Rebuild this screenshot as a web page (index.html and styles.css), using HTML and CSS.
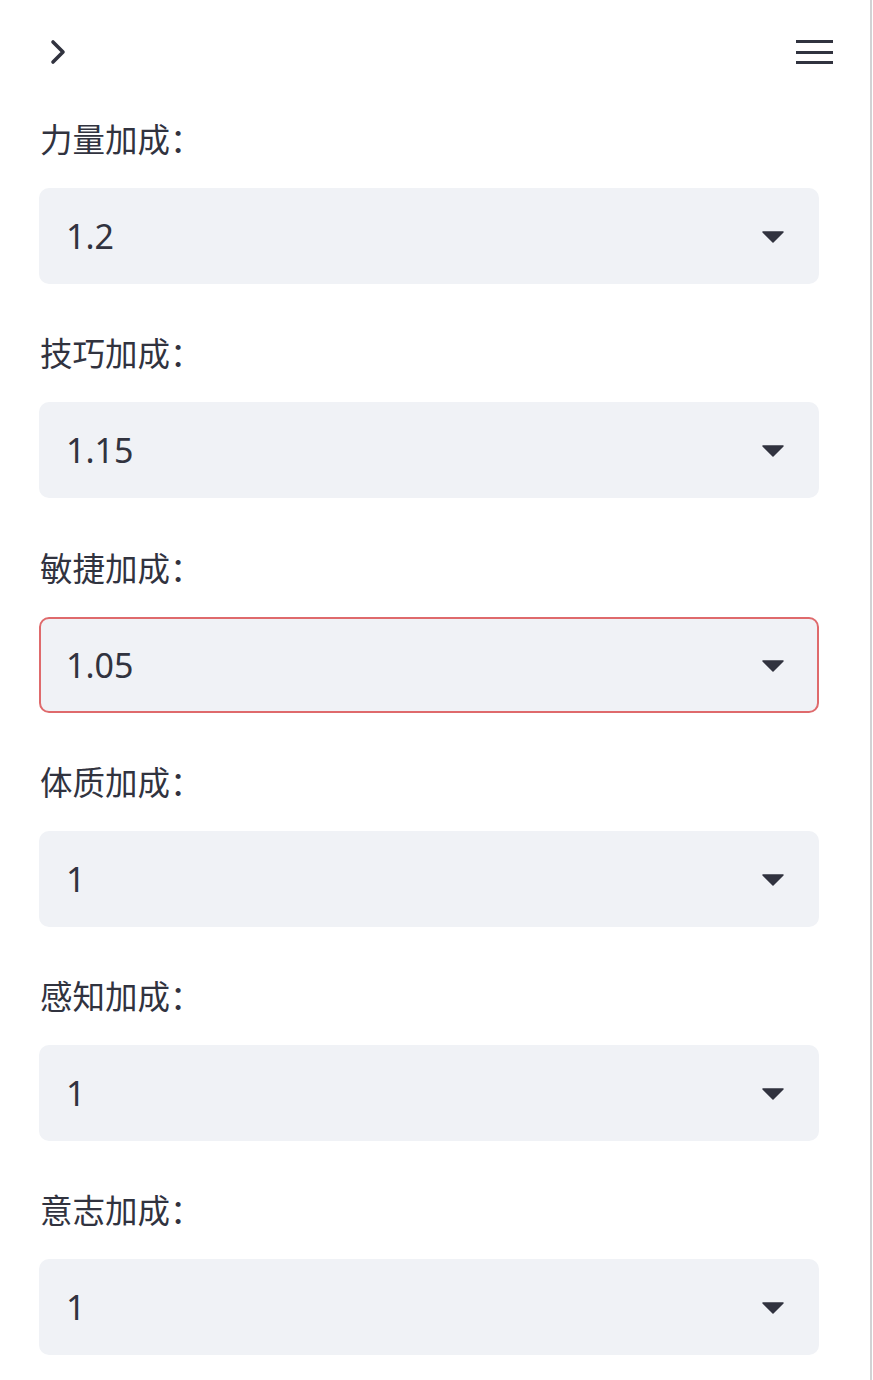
FILE: index.html
```html
<!DOCTYPE html>
<html lang="zh">
<head>
<meta charset="utf-8">
<link rel="stylesheet" href="styles.css">
</head>
<body>
<div class="sidebar">
  <div class="header">
    <svg class="chevron" width="28" height="28" viewBox="0 0 28 28"><path d="M9 4 L19 14 L9 24" fill="none" stroke="#31333F" stroke-width="3.6" stroke-linecap="round" stroke-linejoin="round"/></svg>
    <svg class="menu" width="40" height="28" viewBox="0 0 40 28"><rect x="2" y="2" width="37" height="3" fill="#31333F"/><rect x="2" y="13" width="37" height="3" fill="#31333F"/><rect x="2" y="23" width="37" height="3" fill="#31333F"/></svg>
  </div>
  <div class="fields">
    <div class="field">
      <div class="label">力量加成：</div>
      <div class="select"><span class="value">1.2</span><svg class="arrow" width="22" height="18" viewBox="0 0 22 18"><path d="M1 5 H21 L11 15 Z" fill="#31333F" stroke="#31333F" stroke-width="1.5" stroke-linejoin="round"/></svg></div>
    </div>
    <div class="field">
      <div class="label">技巧加成：</div>
      <div class="select"><span class="value">1.15</span><svg class="arrow" width="22" height="18" viewBox="0 0 22 18"><path d="M1 5 H21 L11 15 Z" fill="#31333F" stroke="#31333F" stroke-width="1.5" stroke-linejoin="round"/></svg></div>
    </div>
    <div class="field">
      <div class="label">敏捷加成：</div>
      <div class="select focused"><span class="value">1.05</span><svg class="arrow" width="22" height="18" viewBox="0 0 22 18"><path d="M1 5 H21 L11 15 Z" fill="#31333F" stroke="#31333F" stroke-width="1.5" stroke-linejoin="round"/></svg></div>
    </div>
    <div class="field">
      <div class="label">体质加成：</div>
      <div class="select"><span class="value">1</span><svg class="arrow" width="22" height="18" viewBox="0 0 22 18"><path d="M1 5 H21 L11 15 Z" fill="#31333F" stroke="#31333F" stroke-width="1.5" stroke-linejoin="round"/></svg></div>
    </div>
    <div class="field">
      <div class="label">感知加成：</div>
      <div class="select"><span class="value">1</span><svg class="arrow" width="22" height="18" viewBox="0 0 22 18"><path d="M1 5 H21 L11 15 Z" fill="#31333F" stroke="#31333F" stroke-width="1.5" stroke-linejoin="round"/></svg></div>
    </div>
    <div class="field">
      <div class="label">意志加成：</div>
      <div class="select"><span class="value">1</span><svg class="arrow" width="22" height="18" viewBox="0 0 22 18"><path d="M1 5 H21 L11 15 Z" fill="#31333F" stroke="#31333F" stroke-width="1.5" stroke-linejoin="round"/></svg></div>
    </div>
  </div>
</div>
</body>
</html>
```
FILE: styles.css
```css
html, body {
  margin: 0;
  padding: 0;
  background: #ffffff;
}
body {
  width: 873px;
  height: 1380px;
  overflow: hidden;
  color: #31333F;
  font-family: "Noto Sans", "Noto Sans CJK SC", sans-serif;
}
.sidebar {
  width: 870px;
  height: 1380px;
  border-right: 2px solid #d2d2d4;
  box-sizing: content-box;
}
.header {
  height: 104px;
  display: flex;
  align-items: center;
  justify-content: space-between;
  padding: 0 36px 0 44px;
}
.chevron, .menu {
  display: block;
}
.fields {
  display: flex;
  flex-direction: column;
  padding: 12px 51px 0 39px;
}
.field {
  display: flex;
  flex-direction: column;
  margin-bottom: 46.3px;
}
.label {
  font-family: "Noto Sans CJK SC", sans-serif;
  font-size: 32.5px;
  line-height: 44px;
  height: 44px;
  padding-left: 1px;
  margin-bottom: 28px;
  color: #31333F;
}
.select {
  height: 96px;
  box-sizing: border-box;
  background: #F0F2F6;
  border: 2px solid transparent;
  border-radius: 10px;
  display: flex;
  align-items: center;
  justify-content: space-between;
  padding: 0 33px 0 25px;
}
.select.focused {
  border-color: #df6a6c;
}
.value {
  font-family: "Noto Sans", sans-serif;
  font-size: 34px;
  line-height: 1;
  color: #31333F;
}
.arrow {
  display: block;
}
```
